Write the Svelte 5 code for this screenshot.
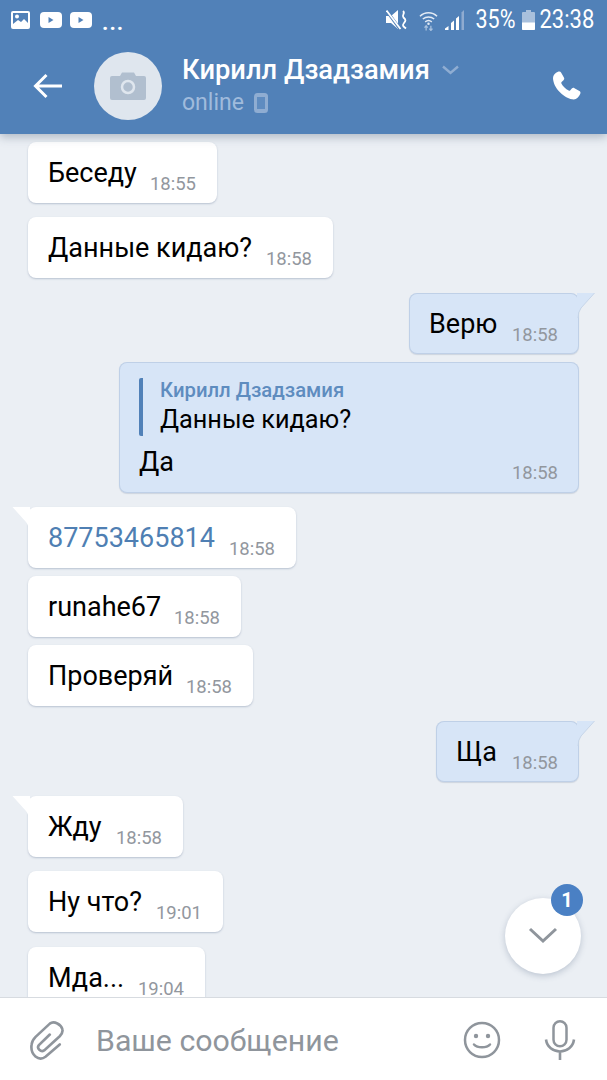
<script>
  const messages = [
    { text: "Беседу", time: "18:55", width: 189, gap: 8 },
    { text: "Данные кидаю?", time: "18:58", width: 305, gap: 14 },
    { text: "Верю", time: "18:58", width: 170, gap: 15, out: true, tail: true },
    { reply: { name: "Кирилл Дзадзамия", text: "Данные кидаю?" }, text: "Да", time: "18:58", width: 460, gap: 8, out: true },
    { text: "87753465814", time: "18:58", width: 268, gap: 14, tail: true, link: true },
    { text: "runahe67", time: "18:58", width: 213, gap: 8 },
    { text: "Проверяй", time: "18:58", width: 225, gap: 8 },
    { text: "Ща", time: "18:58", width: 143, gap: 15, out: true, tail: true },
    { text: "Жду", time: "18:58", width: 155, gap: 14, tail: true },
    { text: "Ну что?", time: "19:01", width: 195, gap: 14 },
    { text: "Мда...", time: "19:04", width: 177, gap: 15 }
  ];
</script>

<div class="screen">
  <header class="top">
    <div class="status">
      <div class="notifs">
        <svg width="22" height="20" viewBox="0 0 22 20">
          <rect x="1" y="1" width="19" height="18" rx="2" fill="#fff" />
          <rect x="3" y="3" width="15" height="11" fill="#5181b8" />
          <circle cx="7" cy="6.5" r="2" fill="#fff" />
          <path d="M3 14l5-4 3 2 3-3 4 4v3H3z" fill="#fff" />
        </svg>
        <svg width="22" height="16" viewBox="0 0 22 16">
          <rect width="22" height="16" rx="4" fill="#fff" />
          <path d="M8.500 5v6l5-3z" fill="#5181b8" />
        </svg>
        <svg width="22" height="16" viewBox="0 0 22 16">
          <rect width="22" height="16" rx="4" fill="#fff" />
          <path d="M8.500 5v6l5-3z" fill="#5181b8" />
        </svg>
        <span class="more">...</span>
      </div>
      <div class="sys">
        <svg class="mute" width="22" height="20" viewBox="0 0 22 20">
          <path d="M0 6h5L12 0v19L5 13H0z" fill="#fff" />
          <path d="M0 0l14 19" stroke="#5181b8" stroke-width="3" />
          <path d="M0.500 0.500l14 18.500" stroke="#fff" stroke-width="1.800" />
          <path d="M17 1c3 2.500-2 4 .5 6.500s2.500 3 .5 5.500-1 3 2 5.500" fill="none" stroke="#fff" stroke-width="1.800" />
        </svg>
        <svg class="wifi" width="19" height="21" viewBox="0 0 20 21">
          <path d="M1 6c5-5 13-5 18 0M4 9c3.500-3 8.500-3 12 0M6.500 12c2-1.600 5-1.600 7 0" fill="none" stroke="#e3ebf5" stroke-width="1.500" />
          <circle cx="10" cy="14" r="1.300" fill="#e3ebf5" />
          <path d="M7.500 21v-5M5.800 18l1.700-2 1.700 2" fill="none" stroke="#a9c2df" stroke-width="1.300" />
          <path d="M12.500 16v5M10.800 19l1.700 2 1.700-2" fill="none" stroke="#a9c2df" stroke-width="1.300" />
        </svg>
        <svg class="signal" width="20" height="20" viewBox="0 0 20 20">
          <path d="M0 20v-1.500L3.500 16v4z" fill="#fff" />
          <path d="M6 20v-7l3-2.500V20z" fill="#fff" />
          <path d="M11 20V8.500L14 6v14z" fill="#fff" />
          <path d="M16.500 20V2.500L19 0v20z" fill="#8fabd0" />
        </svg>
        <span class="clock pct">35%</span>
        <svg class="batt" width="13" height="20" viewBox="0 0 13 20">
          <path d="M4 0h5v2h3a1 1 0 0 1 1 1v16a1 1 0 0 1-1 1H1a1 1 0 0 1-1-1V3a1 1 0 0 1 1-1h3z" fill="#a9c0dc" />
          <path d="M0 12.500h13V19a1 1 0 0 1-1 1H1a1 1 0 0 1-1-1z" fill="#fff" />
        </svg>
        <span class="clock">23:38</span>
      </div>
    </div>

    <div class="bar">
      <svg class="back" width="30" height="26" viewBox="0 0 30 26">
        <path d="M29 13H3M13.500 2L2.500 13l11 11" fill="none" stroke="#fff" stroke-width="3" />
      </svg>
      <div class="avatar">
        <svg width="36" height="28" viewBox="0 0 36 28">
          <path d="M2 4h8l2-3.500h12L26 4h8a2 2 0 0 1 2 2v20a2 2 0 0 1-2 2H2a2 2 0 0 1-2-2V6a2 2 0 0 1 2-2z" fill="#b1bfcf" />
          <circle cx="18" cy="15" r="6" fill="none" stroke="#dfe6ee" stroke-width="2.500" />
        </svg>
      </div>
      <div class="who">
        <div class="name">
          Кирилл Дзадзамия
          <svg width="17" height="10" viewBox="0 0 17 10">
            <path d="M1 1.500l7.500 6.500L16 1.500" fill="none" stroke="#8fadd2" stroke-width="2.400" />
          </svg>
        </div>
        <div class="online">
          online
          <svg width="14" height="20" viewBox="0 0 14 20">
            <rect x="0" y="0" width="14" height="20" rx="3.500" fill="#8fadd2" />
            <rect x="3" y="4" width="8" height="12" fill="#5f8cc0" />
          </svg>
        </div>
      </div>
      <svg class="phone" width="30" height="30" viewBox="0 0 30 30">
        <path d="M6 .8c1.300-.7 2.500-.4 3.200.9l2.700 4.800c.6 1 .4 1.900-.4 2.700L9.600 11c-.4.400-.5.900-.2 1.400 1.700 3 4.200 5.500 7.300 7.200.5.300 1 .2 1.400-.2l1.700-1.800c.8-.8 1.700-1 2.700-.4l4.900 2.900c1.100.7 1.400 1.800.8 2.900-1.300 2.900-3.500 5.500-6.400 5.500-4.300 0-9.600-2.900-13.600-7C3.400 17.200 1 11 1 7c0-2.800 2.200-4.900 5-6.200z" fill="#fff" />
      </svg>
    </div>
  </header>

  <main class="chat">
    {#each messages as m}
      <div class="row" class:out={m.out} style="margin-top: {m.gap}px">
        <div class="bubble" class:reply-bubble={m.reply} style="width: {m.width}px">
          {#if m.tail}
            <svg class="tail" width="19" height="26" viewBox="0 0 19 26">
              {#if m.out}
                <path d="M0 0H17.500L4 15Q1 19 1 25H0z" fill="#d7e5f7" />
                <path d="M17.500 0L4 15Q1 19 1 25" fill="none" stroke="#c6d5e8" stroke-width="1" />
              {:else}
                <path d="M19 0H1.500L15 15Q18 19 18 25H19z" fill="#fff" />
              {/if}
            </svg>
          {/if}
          {#if m.reply}
            <div class="quote">
              <div class="quote-name">{m.reply.name}</div>
              <div class="text">{m.reply.text}</div>
            </div>
          {/if}
          <div class="line">
            <span class="text" class:link={m.link}>{m.text}</span>
            <span class="time">{m.time}</span>
          </div>
        </div>
      </div>
    {/each}

    <button class="down" aria-label="Вниз">
      <svg width="30" height="18" viewBox="0 0 30 18">
        <path d="M2 2l13 12L28 2" fill="none" stroke="#8f959c" stroke-width="3" />
      </svg>
      <span class="badge">1</span>
    </button>
  </main>

  <footer class="composer">
    <svg class="clip" width="37" height="41" viewBox="40 44 110 124">
      <path d="M135 118L92 155C72 170 45 150 50 118C51 108 55 102 62 95L105 55C118 45 140 58 143 72C145 80 140 88 135 93L88 136C78 142 64 130 72 120L105 88" fill="none" stroke="#8f959c" stroke-width="8" stroke-linecap="round" />
    </svg>
    <span class="placeholder">Ваше сообщение</span>
    <svg class="smile" width="38" height="38" viewBox="0 0 38 38">
      <circle cx="19" cy="19" r="17" fill="none" stroke="#8f959c" stroke-width="2.500" />
      <circle cx="13" cy="15" r="2.200" fill="#8f959c" />
      <circle cx="25" cy="15" r="2.200" fill="#8f959c" />
      <path d="M11 23.500c3.500 3.800 12.500 3.800 16 0" fill="none" stroke="#8f959c" stroke-width="2.500" stroke-linecap="round" />
    </svg>
    <svg class="mic" width="32" height="40" viewBox="0 0 32 40">
      <rect x="9.500" y="1.250" width="13" height="25" rx="6.500" fill="none" stroke="#8f959c" stroke-width="2.500" />
      <path d="M2 19.500c1 7.500 7 12 14 12s13-4.500 14-12M16 31v9" fill="none" stroke="#8f959c" stroke-width="2.600" />
    </svg>
  </footer>
</div>

<style>
  :global(body) {
    margin: 0;
  }

  .screen {
    width: 607px;
    height: 1080px;
    display: flex;
    flex-direction: column;
    overflow: hidden;
    background: #ebeff4;
    font-family: Roboto, "Noto Sans", sans-serif;
  }

  .top {
    height: 134px;
    flex: none;
    background: #5181b8;
    box-shadow: 0 3px 9px rgba(60, 80, 110, 0.35);
    position: relative;
    z-index: 2;
    color: #fff;
  }

  .status {
    height: 40px;
    display: flex;
    justify-content: space-between;
    align-items: center;
    padding: 0 13px 0 10px;
  }

  .notifs {
    display: flex;
    align-items: center;
    gap: 8px;
  }

  .more {
    font-size: 22px;
    font-weight: 700;
    line-height: 20px;
    margin: 5px 0 0 2px;
    letter-spacing: 1px;
  }

  .sys {
    display: flex;
    align-items: center;
  }

  .mute {
    margin-right: 11px;
  }

  .wifi {
    margin-right: 7px;
  }

  .signal {
    margin-right: 13px;
  }

  .clock {
    font-size: 25px;
    line-height: 30px;
    display: inline-block;
    transform: scaleX(0.88);
    transform-origin: right center;
    margin-left: -9px;
  }

  .pct {
    margin-right: 6px;
    transform: scaleX(0.86);
  }

  .batt {
    margin-right: 6px;
  }

  .bar {
    height: 94px;
    display: flex;
    align-items: center;
    padding: 0 25px 0 33px;
  }

  .back {
    flex: none;
    margin-top: -2px;
  }

  .avatar {
    width: 68px;
    height: 68px;
    flex: none;
    margin: -2px 0 0 31px;
    border-radius: 50%;
    background: #dfe6ee;
    display: flex;
    align-items: center;
    justify-content: center;
  }

  .who {
    flex: 1;
    margin: -3px 0 0 20px;
  }

  .name {
    font-size: 27.3px;
    font-weight: 500;
    line-height: 32px;
    display: flex;
    align-items: center;
    gap: 12px;
  }

  .online {
    font-size: 23px;
    line-height: 30px;
    color: #a0bbdc;
    display: flex;
    align-items: center;
    gap: 10px;
    margin-top: 2px;
  }

  .phone {
    flex: none;
    margin-top: -2px;
  }

  .chat {
    flex: 1;
    min-height: 0;
    overflow: hidden;
    position: relative;
    padding: 0 28px;
  }

  .row {
    display: flex;
  }

  .row.out {
    justify-content: flex-end;
  }

  .bubble {
    position: relative;
    flex: none;
    box-sizing: border-box;
    height: 61px;
    padding: 0 21px 0 20px;
    background: #fff;
    border-radius: 8px;
    box-shadow: 0 1px 2px rgba(90, 110, 140, 0.35);
    display: flex;
    flex-direction: column;
    justify-content: center;
  }

  .out .bubble {
    background: #d7e5f7;
    box-shadow: inset 0 0 0 1px rgba(130, 155, 190, 0.28), 0 1px 1px rgba(90, 110, 140, 0.2);
  }

  .reply-bubble {
    height: 131px;
    justify-content: flex-start;
    padding-top: 16px;
  }

  .tail {
    position: absolute;
    top: 0;
    left: -17px;
  }

  .out .tail {
    left: auto;
    right: -17px;
  }

  .line {
    display: flex;
    align-items: baseline;
    justify-content: space-between;
  }

  .text {
    font-size: 27px;
    line-height: 34px;
    color: #000;
  }

  .link {
    color: #4f7fb3;
  }

  .time {
    font-size: 18.5px;
    line-height: 22px;
    color: #92979e;
    position: relative;
    top: 8px;
  }

  .quote {
    border-left: 4px solid #5181b8;
    border-radius: 2px;
    padding-left: 17px;
    height: 58px;
    margin-bottom: 9px;
    display: flex;
    flex-direction: column;
  }

  .quote-name {
    font-size: 20.3px;
    font-weight: 500;
    line-height: 24px;
    color: #5e8cbf;
  }

  .reply-bubble .quote .text {
    font-size: 25.3px;
    line-height: 36px;
  }

  .down {
    position: absolute;
    right: 26px;
    bottom: 23px;
    width: 76px;
    height: 76px;
    padding: 0;
    border: 0;
    border-radius: 50%;
    background: #fff;
    box-shadow: 0 2px 6px rgba(80, 100, 130, 0.3);
    display: flex;
    align-items: center;
    justify-content: center;
  }

  .badge {
    position: absolute;
    top: -14px;
    right: -2px;
    width: 32px;
    height: 32px;
    border-radius: 50%;
    background: #4a80c4;
    color: #fff;
    font: 700 20px/32px Roboto, sans-serif;
    text-align: center;
  }

  .composer {
    height: 83px;
    flex: none;
    box-sizing: border-box;
    border-top: 1px solid #d7dbe0;
    background: #fff;
    display: flex;
    align-items: center;
    position: relative;
    z-index: 1;
    padding: 2px 31px 0 28px;
  }

  .clip {
    flex: none;
  }

  .placeholder {
    flex: 1;
    margin-left: 31px;
    font-size: 30.3px;
    color: #8f959c;
  }

  .smile {
    flex: none;
    margin-right: 43px;
  }

  .mic {
    flex: none;
  }
</style>
